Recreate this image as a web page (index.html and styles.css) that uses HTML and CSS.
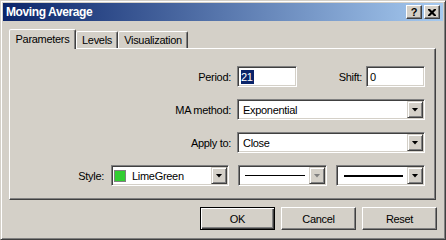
FILE: index.html
```html
<!DOCTYPE html>
<html>
<head>
<meta charset="utf-8">
<link rel="stylesheet" href="styles.css">
</head>
<body>
<div class="window">
  <div class="titlebar">
    <span class="title">Moving Average</span>
    <div class="caption-btns">
      <div class="cbtn"><span class="q">?</span></div>
      <div class="cbtn">
        <svg width="8" height="7" viewBox="0 0 8 7"><path d="M0 0h2l2 2l2-2h2v1l-2.5 2.5l2.5 2.5v1h-2l-2-2l-2 2h-2v-1l2.5-2.5l-2.5-2.5z" fill="#000"/></svg>
      </div>
    </div>
  </div>

  <div class="tabs">
    <div class="tab active tab-params">Parameters</div>
    <div class="tab tab-levels">Levels</div>
    <div class="tab tab-vis">Visualization</div>
  </div>

  <div class="panel">
    <div class="row">
      <span class="lbl lbl-main">Period:</span>
      <div class="field w60"><span class="hl">21</span></div>
      <span class="lbl lbl-shift">Shift:</span>
      <div class="field w59"><span>0</span></div>
    </div>
    <div class="row">
      <span class="lbl lbl-main">MA method:</span>
      <div class="combo w188">
        <div class="combo-text">Exponential</div>
        <div class="arrow"><span class="tri"></span></div>
      </div>
    </div>
    <div class="row">
      <span class="lbl lbl-main">Apply to:</span>
      <div class="combo w188">
        <div class="combo-text">Close</div>
        <div class="arrow"><span class="tri"></span></div>
      </div>
    </div>
    <div class="row">
      <span class="lbl lbl-style">Style:</span>
      <div class="combo w118">
        <div class="combo-text color-text"><span class="swatch"></span>LimeGreen</div>
        <div class="arrow"><span class="tri"></span></div>
      </div>
      <div class="combo w89 gap9">
        <div class="line-area thin"><span class="line"></span></div>
        <div class="arrow"><span class="tri disabled"></span></div>
      </div>
      <div class="combo w89 gap9">
        <div class="line-area thick"><span class="line"></span></div>
        <div class="arrow"><span class="tri"></span></div>
      </div>
    </div>
  </div>

  <div class="buttons">
    <div class="btn default">OK</div>
    <div class="btn">Cancel</div>
    <div class="btn">Reset</div>
  </div>
</div>
</body>
</html>
```

FILE: styles.css
```css
* { box-sizing: border-box; }

body {
  margin: 0;
  font-family: "Liberation Sans", Arial, sans-serif;
  font-size: 11px;
  letter-spacing: -0.3px;
  color: #000;
  background: #D4D0C8;
}

.window {
  width: 446px;
  height: 240px;
  background: #D4D0C8;
  border: 1px solid;
  border-color: #D4D0C8 #404040 #404040 #D4D0C8;
  box-shadow: inset 1px 1px #fff, inset -1px -1px #808080;
  padding: 2px;
  display: flex;
  flex-direction: column;
}

.titlebar {
  flex: none;
  height: 18px;
  background: linear-gradient(to right, #0A246A, #A6CAF0);
  display: flex;
  align-items: center;
  justify-content: space-between;
  padding: 0 3px 0 3px;
}

.title {
  color: #fff;
  font-weight: bold;
  font-size: 12px;
  letter-spacing: -0.4px;
}

.caption-btns {
  display: flex;
  gap: 2px;
}

.cbtn {
  width: 16px;
  height: 14px;
  background: #D4D0C8;
  border: 1px solid;
  border-color: #fff #404040 #404040 #fff;
  box-shadow: inset -1px -1px #808080;
  display: flex;
  align-items: center;
  justify-content: center;
}

.cbtn .q {
  font-weight: bold;
  font-size: 11px;
  line-height: 11px;
  letter-spacing: 0;
}

.tabs {
  flex: none;
  display: flex;
  align-items: flex-end;
  height: 19px;
  margin-top: 8px;
  padding-left: 6px;
}

.tab {
  height: 17px;
  border: 1px solid;
  border-bottom: none;
  border-color: #fff #404040 transparent #fff;
  border-radius: 2px 2px 0 0;
  box-shadow: inset -1px 0 #808080;
  display: flex;
  align-items: center;
  justify-content: center;
  background: #D4D0C8;
}

.tab.active {
  height: 20px;
  margin-bottom: -1px;
  position: relative;
  z-index: 1;
  padding-bottom: 2px;
}

.tab-params { width: 67px; }
.tab-levels { width: 42px; }
.tab-vis { width: 70px; }

.panel {
  flex: none;
  height: 152px;
  margin: 0 7px 0 6px;
  border: 1px solid;
  border-color: #fff #404040 #404040 #fff;
  box-shadow: inset -1px -1px #808080;
  padding-top: 17px;
  display: flex;
  flex-direction: column;
  gap: 12px;
}

.row {
  display: flex;
  align-items: center;
  height: 21px;
}

.lbl { text-align: right; white-space: nowrap; }
.lbl-main { width: 221px; margin-right: 6px; }
.lbl-shift { width: 65px; margin-right: 4px; }
.lbl-style { width: 94px; margin-right: 7px; }

.field, .combo {
  height: 21px;
  background: #fff;
  border: 1px solid;
  border-color: #808080 #fff #fff #808080;
  box-shadow: inset 1px 1px #404040, inset -1px -1px #D4D0C8;
  padding: 1px;
  display: flex;
  align-items: center;
}

.field { padding-left: 3px; }

.w60 { width: 60px; }
.w59 { width: 59px; }
.w188 { width: 188px; }
.w118 { width: 118px; }
.w89 { width: 89px; }
.gap9 { margin-left: 9px; }

.hl {
  background: #0A246A;
  color: #fff;
  line-height: 14px;
  padding: 0 1px 0 0;
}

.combo-text {
  flex: 1;
  height: 100%;
  display: flex;
  align-items: center;
  padding-left: 4px;
  white-space: nowrap;
}

.color-text { padding-left: 1px; }

.swatch {
  width: 12px;
  height: 12px;
  background: #32CD32;
  border: 1px solid #808080;
  margin-right: 6px;
  flex: none;
}

.arrow {
  flex: none;
  width: 16px;
  height: 17px;
  background: #D4D0C8;
  border: 1px solid;
  border-color: #D4D0C8 #404040 #404040 #D4D0C8;
  box-shadow: inset 1px 1px #fff, inset -1px -1px #808080;
  display: flex;
  align-items: center;
  justify-content: center;
}

.tri {
  width: 7px;
  height: 4px;
  background: #000;
  clip-path: polygon(0 0, 100% 0, 50% 100%);
}

.tri.disabled {
  background: #808080;
}

.line-area {
  flex: 1;
  height: 100%;
  display: flex;
  align-items: center;
}

.line-area.thin { margin: 0 4px 0 5px; }
.line-area.thin .line { height: 1px; }
.line-area.thick { margin: 0 4px 0 6px; }
.line-area.thick .line { height: 2px; }

.line {
  display: block;
  width: 100%;
  background: #000;
}

.buttons {
  flex: none;
  display: flex;
  justify-content: flex-end;
  gap: 6px;
  margin-top: 7px;
  padding-right: 6px;
}

.btn {
  width: 75px;
  height: 23px;
  background: #D4D0C8;
  border: 1px solid;
  border-color: #fff #404040 #404040 #fff;
  box-shadow: inset -1px -1px #808080;
  display: flex;
  align-items: center;
  justify-content: center;
}

.btn.default {
  border-color: #000;
  box-shadow: inset 1px 1px #fff, inset -1px -1px #404040, inset -2px -2px #808080;
}
```
